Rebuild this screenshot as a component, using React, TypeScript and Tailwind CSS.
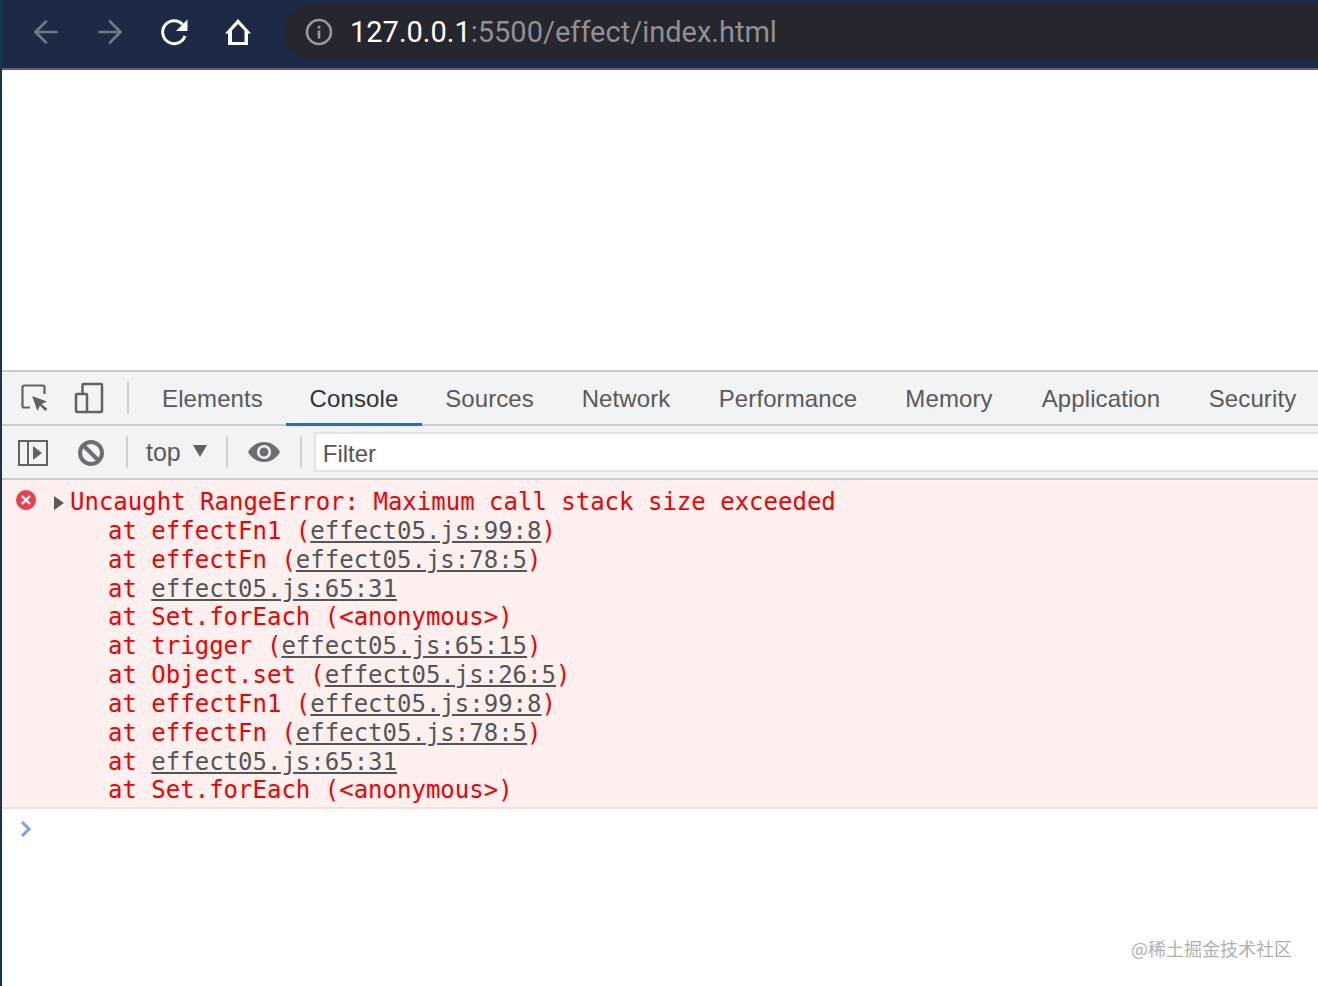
import { ArrowLeft, ArrowRight } from "lucide-react";

// fixed widths so each label sits where the devtools strip puts it
const tabs = [
  { name: "Elements", width: "w-[147px]" },
  { name: "Console", width: "w-[136px]" },
  { name: "Sources", width: "w-[135px]" },
  { name: "Network", width: "w-[138px]" },
  { name: "Performance", width: "w-[186px]" },
  { name: "Memory", width: "w-[136px]" },
  { name: "Application", width: "w-[168px]" },
  { name: "Security", width: "w-[135px]" },
];

type Frame = { pre: string; link?: string; post?: string };

const frames: Frame[] = [
  { pre: "at effectFn1 (", link: "effect05.js:99:8", post: ")" },
  { pre: "at effectFn (", link: "effect05.js:78:5", post: ")" },
  { pre: "at ", link: "effect05.js:65:31" },
  { pre: "at Set.forEach (<anonymous>)" },
  { pre: "at trigger (", link: "effect05.js:65:15", post: ")" },
  { pre: "at Object.set (", link: "effect05.js:26:5", post: ")" },
  { pre: "at effectFn1 (", link: "effect05.js:99:8", post: ")" },
  { pre: "at effectFn (", link: "effect05.js:78:5", post: ")" },
  { pre: "at ", link: "effect05.js:65:31" },
  { pre: "at Set.forEach (<anonymous>)" },
];

function BrowserBar() {
  return (
    <div className="flex h-[70px] shrink-0 items-center border-b-2 border-[#5b5b8c] bg-[#1d2a45] pb-[4px]">
      <div className="flex w-[283px] shrink-0 items-center pl-[26px]">
        <ArrowLeft className="h-[36px] w-[36px] text-[#6f7889]" strokeWidth={1.8} />
        <ArrowRight className="ml-[28px] h-[36px] w-[36px] text-[#6f7889]" strokeWidth={1.8} />
        <svg viewBox="0 0 32 32" className="ml-[30px] h-[32px] w-[32px]">
          <path d="M24.5 8.200A11.500 11.500 0 1 0 27 20" fill="none" stroke="#fff" strokeWidth="3" />
          <path d="M29.500 3.500V15H18z" fill="#fff" />
        </svg>
        <svg viewBox="0 0 32 32" className="ml-[32px] h-[32px] w-[32px]">
          <path
            d="M16 3 3 17.500H6V29H26V17.500H29ZM16 8 10 14.500V26H22.500V14.500Z"
            fill="#fff"
            fillRule="evenodd"
          />
        </svg>
      </div>
      <div className="flex h-[56px] flex-1 items-center rounded-l-[28px] bg-[#26262e] pl-[20px] font-['Roboto',sans-serif] text-[29px]">
        <svg viewBox="0 0 28 28" className="h-[28px] w-[28px]">
          <circle cx="14" cy="14" r="12" fill="none" stroke="#9a9aa0" strokeWidth="2.500" />
          <rect x="12.700" y="12.500" width="2.600" height="8" fill="#9a9aa0" />
          <rect x="12.700" y="7.800" width="2.600" height="2.800" fill="#9a9aa0" />
        </svg>
        <span className="ml-[17px] pt-[2px] text-white">127.0.0.1</span>
        <span className="pt-[2px] text-[#8f8f95]">:5500/effect/index.html</span>
      </div>
    </div>
  );
}

function TabBar() {
  return (
    <div className="flex h-[56px] shrink-0 border-y-2 border-[#cbcbcb] bg-[#f2f3f5] font-['Liberation_Sans',sans-serif] text-[24px]">
      <div className="flex w-[137px] shrink-0 items-center pl-[19px]">
        <svg viewBox="0 0 28 28" className="h-[28px] w-[28px]">
          <path
            d="M9 23.500H3A1.500 1.500 0 0 1 1.500 22V3A1.500 1.500 0 0 1 3 1.500H22A1.500 1.500 0 0 1 23.500 3V10"
            fill="none"
            stroke="#5f6368"
            strokeWidth="2.200"
          />
          <path d="M11 12 26 17.500 20.500 20 26.500 25 24 27 19 21.500 16.500 27Z" fill="#5f6368" />
        </svg>
        <svg viewBox="0 0 32 32" className="ml-[24px] h-[32px] w-[32px]">
          <path
            d="M9.500 11V3A1 1 0 0 1 10.500 2H28A1 1 0 0 1 29 3V29A1 1 0 0 1 28 30H4A1 1 0 0 1 3 29V13A1 1 0 0 1 4 12H13A1 1 0 0 1 14 13V30"
            fill="none"
            stroke="#5f6368"
            strokeWidth="2.500"
          />
        </svg>
        <div className="ml-[22px] h-[32px] w-[2px] bg-[#d0d0d0]" />
      </div>
      <div className="flex flex-1">
        {tabs.map((t) => (
          <div
            key={t.name}
            className={
              t.name === "Console"
                ? `${t.width} -mb-[2px] flex shrink-0 items-center justify-center border-b-[3px] border-[#1a73d2] pt-[3px] tracking-[0.1px] text-[#333]`
                : `${t.width} -mb-[2px] flex shrink-0 items-center justify-center border-b-[3px] border-transparent pt-[3px] tracking-[0.1px] text-[#5a5a5a]`
            }
          >
            {t.name}
          </div>
        ))}
      </div>
    </div>
  );
}

function FilterBar() {
  return (
    <div className="flex h-[54px] shrink-0 items-center border-b-2 border-[#cbcbcb] bg-[#f2f3f5] font-['Liberation_Sans',sans-serif] text-[24px] text-[#5a5a5a]">
      <svg viewBox="0 0 30 26" className="ml-[16px] mt-[2px] h-[26px] w-[30px]">
        <path d="M1 1h28v24H1zM10 1v24" fill="none" stroke="#5f6368" strokeWidth="2" />
        <path d="m15 6 9 7-9 7z" fill="#5f6368" />
      </svg>
      <svg viewBox="0 0 28 28" className="ml-[29px] mt-[2px] h-[28px] w-[28px]">
        <circle cx="14" cy="14" r="11" fill="none" stroke="#6b6f73" strokeWidth="4" />
        <path d="m6 6 16 16" stroke="#6b6f73" strokeWidth="4" />
      </svg>
      <div className="ml-[21px] h-[32px] w-[2px] bg-[#d0d0d0]" />
      <span className="ml-[18px] mt-[2px] text-[25px]">top</span>
      <svg viewBox="0 0 14 12" className="mb-[2px] ml-[12px] h-[12px] w-[14px]">
        <path d="M0 0h14L7 12z" fill="#5f6368" />
      </svg>
      <div className="ml-[19px] h-[32px] w-[2px] bg-[#d0d0d0]" />
      <svg viewBox="0 0 32 20" className="ml-[20px] h-[20px] w-[32px]">
        <path d="M0 10C4 3 10 0 16 0s12 3 16 10c-4 7-10 10-16 10S4 17 0 10z" fill="#6b6f73" />
        <circle cx="16" cy="10" r="7" fill="#f2f3f5" />
        <circle cx="16" cy="10" r="4.500" fill="#6b6f73" />
      </svg>
      <div className="ml-[20px] h-[32px] w-[2px] bg-[#d0d0d0]" />
      <div className="ml-[12px] flex h-[40px] flex-1 items-center border-y-2 border-l-2 border-[#e4e4e4] bg-white pl-[7px] pt-[3px] text-[#555]">
        Filter
      </div>
    </div>
  );
}

function ErrorBlock() {
  return (
    <div className="relative shrink-0 border-b-2 border-[#fbdcdc] bg-[#fff0f0] pb-[2px] pl-[68px] pt-[8px] font-['DejaVu_Sans_Mono',monospace] text-[24px] leading-[28.85px] text-[#f00000]">
      <svg viewBox="0 0 20 20" className="absolute left-[14px] top-[10px] h-[20px] w-[20px]">
        <circle cx="10" cy="10" r="10" fill="#e8414f" />
        <path d="m6 6 8 8M14 6l-8 8" stroke="#fff" strokeWidth="2.400" />
      </svg>
      <svg viewBox="0 0 10 14" className="absolute left-[52px] top-[16px] h-[14px] w-[10px]">
        <path d="M0 0l10 7-10 7z" fill="#5a5a5a" />
      </svg>
      <div className="whitespace-pre">Uncaught RangeError: Maximum call stack size exceeded</div>
      {frames.map((f, i) => (
        <div key={i} className="whitespace-pre pl-[38px]">
          {f.pre}
          {f.link && <span className="text-[#555] underline">{f.link}</span>}
          {f.post}
        </div>
      ))}
    </div>
  );
}

export default function App() {
  return (
    <div className="relative flex h-[986px] w-[1318px] flex-col overflow-hidden border-l-2 border-[#1b3550] bg-white">
      <BrowserBar />
      <div className="h-[300px] shrink-0 bg-white" />
      <TabBar />
      <FilterBar />
      <ErrorBlock />
      <div className="pl-[18px] pt-[12px]">
        <svg viewBox="0 0 12 16" className="h-[16px] w-[12px]">
          <path d="m2 1 7 7-7 7" fill="none" stroke="#7f9fe8" strokeWidth="3" />
        </svg>
      </div>
      <div className="absolute right-[26px] top-[935px] font-['Noto_Sans_CJK_SC',sans-serif] text-[18px] leading-[26px] text-[#b0b0b0]">
        @稀土掘金技术社区
      </div>
    </div>
  );
}
